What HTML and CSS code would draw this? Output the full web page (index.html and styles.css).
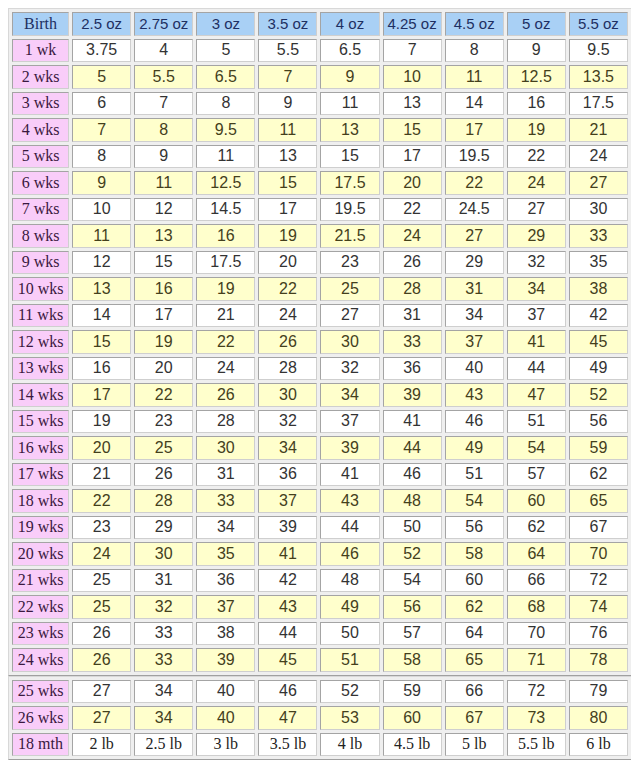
FILE: index.html
```html
<!DOCTYPE html>
<html>
<head>
<meta charset="utf-8">
<link rel="stylesheet" href="styles.css">
</head>
<body>
<table class="grid">
<colgroup><col class="c-label"><col class="c-num"><col class="c-num"><col class="c-num"><col class="c-num"><col class="c-num"><col class="c-num"><col class="c-num"><col class="c-num"><col class="c-num"></colgroup>
<tr class="head"><th class="birth">Birth</th><th>2.5 oz</th><th>2.75 oz</th><th>3 oz</th><th>3.5 oz</th><th>4 oz</th><th>4.25 oz</th><th>4.5 oz</th><th>5 oz</th><th>5.5 oz</th></tr>
<tr><th class="lbl">1 wk</th><td>3.75</td><td>4</td><td>5</td><td>5.5</td><td>6.5</td><td>7</td><td>8</td><td>9</td><td>9.5</td></tr>
<tr class="y"><th class="lbl">2 wks</th><td>5</td><td>5.5</td><td>6.5</td><td>7</td><td>9</td><td>10</td><td>11</td><td>12.5</td><td>13.5</td></tr>
<tr><th class="lbl">3 wks</th><td>6</td><td>7</td><td>8</td><td>9</td><td>11</td><td>13</td><td>14</td><td>16</td><td>17.5</td></tr>
<tr class="y"><th class="lbl">4 wks</th><td>7</td><td>8</td><td>9.5</td><td>11</td><td>13</td><td>15</td><td>17</td><td>19</td><td>21</td></tr>
<tr><th class="lbl">5 wks</th><td>8</td><td>9</td><td>11</td><td>13</td><td>15</td><td>17</td><td>19.5</td><td>22</td><td>24</td></tr>
<tr class="y"><th class="lbl">6 wks</th><td>9</td><td>11</td><td>12.5</td><td>15</td><td>17.5</td><td>20</td><td>22</td><td>24</td><td>27</td></tr>
<tr><th class="lbl">7 wks</th><td>10</td><td>12</td><td>14.5</td><td>17</td><td>19.5</td><td>22</td><td>24.5</td><td>27</td><td>30</td></tr>
<tr class="y"><th class="lbl">8 wks</th><td>11</td><td>13</td><td>16</td><td>19</td><td>21.5</td><td>24</td><td>27</td><td>29</td><td>33</td></tr>
<tr><th class="lbl">9 wks</th><td>12</td><td>15</td><td>17.5</td><td>20</td><td>23</td><td>26</td><td>29</td><td>32</td><td>35</td></tr>
<tr class="y"><th class="lbl">10 wks</th><td>13</td><td>16</td><td>19</td><td>22</td><td>25</td><td>28</td><td>31</td><td>34</td><td>38</td></tr>
<tr><th class="lbl">11 wks</th><td>14</td><td>17</td><td>21</td><td>24</td><td>27</td><td>31</td><td>34</td><td>37</td><td>42</td></tr>
<tr class="y"><th class="lbl">12 wks</th><td>15</td><td>19</td><td>22</td><td>26</td><td>30</td><td>33</td><td>37</td><td>41</td><td>45</td></tr>
<tr><th class="lbl">13 wks</th><td>16</td><td>20</td><td>24</td><td>28</td><td>32</td><td>36</td><td>40</td><td>44</td><td>49</td></tr>
<tr class="y"><th class="lbl">14 wks</th><td>17</td><td>22</td><td>26</td><td>30</td><td>34</td><td>39</td><td>43</td><td>47</td><td>52</td></tr>
<tr><th class="lbl">15 wks</th><td>19</td><td>23</td><td>28</td><td>32</td><td>37</td><td>41</td><td>46</td><td>51</td><td>56</td></tr>
<tr class="y"><th class="lbl">16 wks</th><td>20</td><td>25</td><td>30</td><td>34</td><td>39</td><td>44</td><td>49</td><td>54</td><td>59</td></tr>
<tr><th class="lbl">17 wks</th><td>21</td><td>26</td><td>31</td><td>36</td><td>41</td><td>46</td><td>51</td><td>57</td><td>62</td></tr>
<tr class="y"><th class="lbl">18 wks</th><td>22</td><td>28</td><td>33</td><td>37</td><td>43</td><td>48</td><td>54</td><td>60</td><td>65</td></tr>
<tr><th class="lbl">19 wks</th><td>23</td><td>29</td><td>34</td><td>39</td><td>44</td><td>50</td><td>56</td><td>62</td><td>67</td></tr>
<tr class="y"><th class="lbl">20 wks</th><td>24</td><td>30</td><td>35</td><td>41</td><td>46</td><td>52</td><td>58</td><td>64</td><td>70</td></tr>
<tr><th class="lbl">21 wks</th><td>25</td><td>31</td><td>36</td><td>42</td><td>48</td><td>54</td><td>60</td><td>66</td><td>72</td></tr>
<tr class="y"><th class="lbl">22 wks</th><td>25</td><td>32</td><td>37</td><td>43</td><td>49</td><td>56</td><td>62</td><td>68</td><td>74</td></tr>
<tr><th class="lbl">23 wks</th><td>26</td><td>33</td><td>38</td><td>44</td><td>50</td><td>57</td><td>64</td><td>70</td><td>76</td></tr>
<tr class="y"><th class="lbl">24 wks</th><td>26</td><td>33</td><td>39</td><td>45</td><td>51</td><td>58</td><td>65</td><td>71</td><td>78</td></tr>
</table>
<table class="grid second">
<colgroup><col class="c-label"><col class="c-num"><col class="c-num"><col class="c-num"><col class="c-num"><col class="c-num"><col class="c-num"><col class="c-num"><col class="c-num"><col class="c-num"></colgroup>
<tr><th class="lbl">25 wks</th><td>27</td><td>34</td><td>40</td><td>46</td><td>52</td><td>59</td><td>66</td><td>72</td><td>79</td></tr>
<tr class="y"><th class="lbl">26 wks</th><td>27</td><td>34</td><td>40</td><td>47</td><td>53</td><td>60</td><td>67</td><td>73</td><td>80</td></tr>
<tr class="lb"><th class="lbl">18 mth</th><td>2 lb</td><td>2.5 lb</td><td>3 lb</td><td>3.5 lb</td><td>4 lb</td><td>4.5 lb</td><td>5 lb</td><td>5.5 lb</td><td>6 lb</td></tr>
</table>
</body>
</html>
```
FILE: styles.css
```css
html, body {
  background: #ffffff;
}
body {
  margin: 8px;
}
.grid {
  table-layout: fixed;
  width: 624px;
  border-collapse: separate;
  border-spacing: 3px;
  background: #efefef;
  border: 1px solid;
  border-color: #d8d8d8 #a0a0a0 #a0a0a0 #d8d8d8;
}
.c-label { width: 57px; }
.c-num { width: 59px; }
.grid th,
.grid td {
  height: 21.5px;
  padding: 0;
  text-align: center;
  vertical-align: middle;
  border: 1px solid;
  border-color: #a4a4a4 #cfcfcf #cfcfcf #a4a4a4;
  line-height: 18px;
  white-space: nowrap;
  overflow: hidden;
}
.grid td {
  background: #ffffff;
  color: #333333;
  font-family: "Liberation Sans", Arial, sans-serif;
  font-size: 16px;
}
.grid tr.y td {
  background: #ffffcc;
  color: #44401c;
}
.grid .head th {
  background: #a9d0f5;
  color: #1d2f62;
  font-family: "Liberation Sans", Arial, sans-serif;
  font-size: 15px;
  font-weight: normal;
}
.grid .head th.birth {
  font-family: "Liberation Serif", "Times New Roman", serif;
  font-size: 16px;
}
.grid th.lbl {
  background: #f9cdf9;
  color: #3a1840;
  font-family: "Liberation Serif", "Times New Roman", serif;
  font-size: 16px;
  font-weight: normal;
}
.grid tr.lb td {
  font-family: "Liberation Serif", "Times New Roman", serif;
  font-size: 16px;
  color: #222222;
}
```
